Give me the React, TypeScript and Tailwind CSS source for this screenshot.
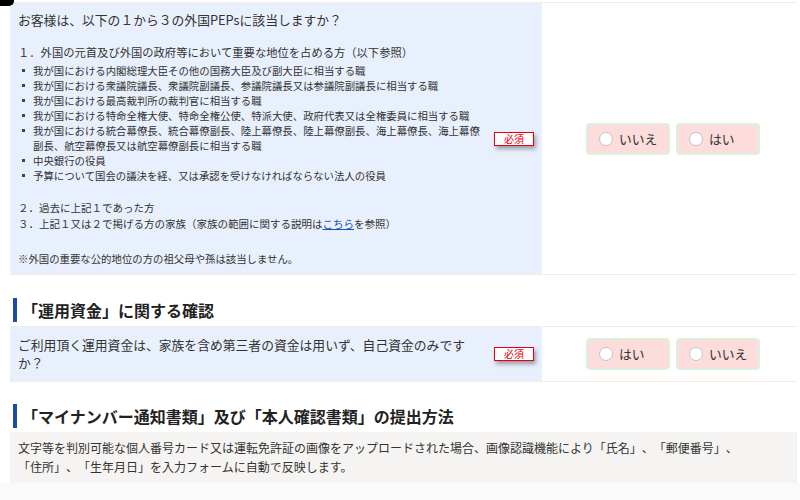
const font = { fontFamily: '"Noto Sans CJK JP", "Noto Sans", sans-serif' }

function Required() {
  return (
    <span className="flex h-[14px] w-[40px] items-center justify-center border-[1.5px] border-[#e50012] bg-white text-[10px] leading-none text-[#e50012] shadow-[2px_3px_4px_rgba(0,0,0,0.35)]">
      必須
    </span>
  )
}

function Choice({ label }: { label: string }) {
  return (
    <label className="flex h-[32px] w-[84px] items-center rounded-[4px] border-2 border-[#dcf1dc] bg-[#fddcdc] pl-[11px]">
      <span className="h-[14px] w-[14px] rounded-full border border-[#c4c4c4] bg-white" />
      <span className="ml-[6px] text-[12.8px] text-[#333]">{label}</span>
    </label>
  )
}

function Heading({ children }: { children: React.ReactNode }) {
  return (
    <div className="flex h-[24px] items-center">
      <span className="ml-[3px] h-full w-[4px] bg-[#1b4aa8]" />
      <h2 className="ml-[5px] text-[16px] font-bold text-[#222]">{children}</h2>
    </div>
  )
}

const posts = [
  "我が国における内閣総理大臣その他の国務大臣及び副大臣に相当する職",
  "我が国における衆議院議長、衆議院副議長、参議院議長又は参議院副議長に相当する職",
  "我が国における最高裁判所の裁判官に相当する職",
  "我が国における特命全権大使、特命全権公使、特派大使、政府代表又は全権委員に相当する職",
  "我が国における統合幕僚長、統合幕僚副長、陸上幕僚長、陸上幕僚副長、海上幕僚長、海上幕僚副長、航空幕僚長又は航空幕僚副長に相当する職",
  "中央銀行の役員",
  "予算について国会の議決を経、又は承認を受けなければならない法人の役員",
]

export default function App() {
  return (
    <div
      className="relative flex h-[500px] flex-col overflow-hidden bg-white pt-[2px] text-[#333] [text-spacing-trim:space-all]"
      style={font}
    >
      {/* focus corner */}
      <div className="absolute left-0 top-0 h-[6px] w-[14px] rounded-br-[5px] bg-black" />

      <div className="ml-[10px] mr-[3px]">
        {/* PEPs question */}
        <div className="flex border-y border-[#f3ece6]">
          <div className="flex w-[532px] items-center bg-[#e9f0fd] py-[7px] pl-[8px]">
            <div className="w-[468px]">
              <p className="text-[12.8px] leading-[19px]">お客様は、以下の１から３の外国PEPsに該当しますか？</p>
              <p className="mt-[15px] text-[11.3px] leading-[16px]">１．外国の元首及び外国の政府等において重要な地位を占める方（以下参照）</p>
              <ul className="mt-[3px] text-[10.4px] leading-[15px]">
                {posts.map((p) => (
                  <li key={p} className="flex">
                    <span className="ml-[4px] mt-[6px] h-[3px] w-[3px] shrink-0 bg-[#444]" />
                    <span className="ml-[8px]">{p}</span>
                  </li>
                ))}
              </ul>
              <p className="mt-[17px] text-[10.5px] leading-[16px]">２．過去に上記１であった方</p>
              <p className="text-[10.5px] leading-[16px]">
                ３．上記１又は２で掲げる方の家族（家族の範囲に関する説明は
                <a className="text-[#1a4fb5] underline">こちら</a>を参照）
              </p>
              <p className="mt-[19px] text-[10.4px] leading-[16px]">※外国の重要な公的地位の方の祖父母や孫は該当しません。</p>
            </div>
            <div className="flex flex-1 justify-center">
              <Required />
            </div>
          </div>
          <div className="flex flex-1 items-center gap-[6px] pl-[44px]">
            <Choice label="いいえ" />
            <Choice label="はい" />
          </div>
        </div>

        {/* funds */}
        <div className="mt-[23px]">
          <Heading>「運用資金」に関する確認</Heading>
        </div>
        <div className="mt-[4px] flex border-y border-[#f3ece6]">
          <div className="flex w-[532px] items-center bg-[#e9f0fd] py-[9px] pl-[8px]">
            <p className="w-[468px] text-[12.8px] leading-[18px]">
              ご利用頂く運用資金は、家族を含め第三者の資金は用いず、自己資金のみですか？
            </p>
            <div className="flex flex-1 justify-center">
              <Required />
            </div>
          </div>
          <div className="flex flex-1 items-center gap-[6px] pl-[44px]">
            <Choice label="はい" />
            <Choice label="いいえ" />
          </div>
        </div>

        {/* my number */}
        <div className="mt-[22px]">
          <Heading>「マイナンバー通知書類」及び「本人確認書類」の提出方法</Heading>
        </div>
        <div className="mt-[4px] bg-[#f5f4f2] pb-[7px] pl-[8px] pt-[6px] text-[12px] leading-[19px]">
          文字等を判別可能な個人番号カード又は運転免許証の画像をアップロードされた場合、画像認識機能により「氏名」、「郵便番号」、
          <br />
          「住所」、「生年月日」を入力フォームに自動で反映します。
        </div>
      </div>
      <div className="flex-1 bg-[#fafafa]" />
    </div>
  )
}
